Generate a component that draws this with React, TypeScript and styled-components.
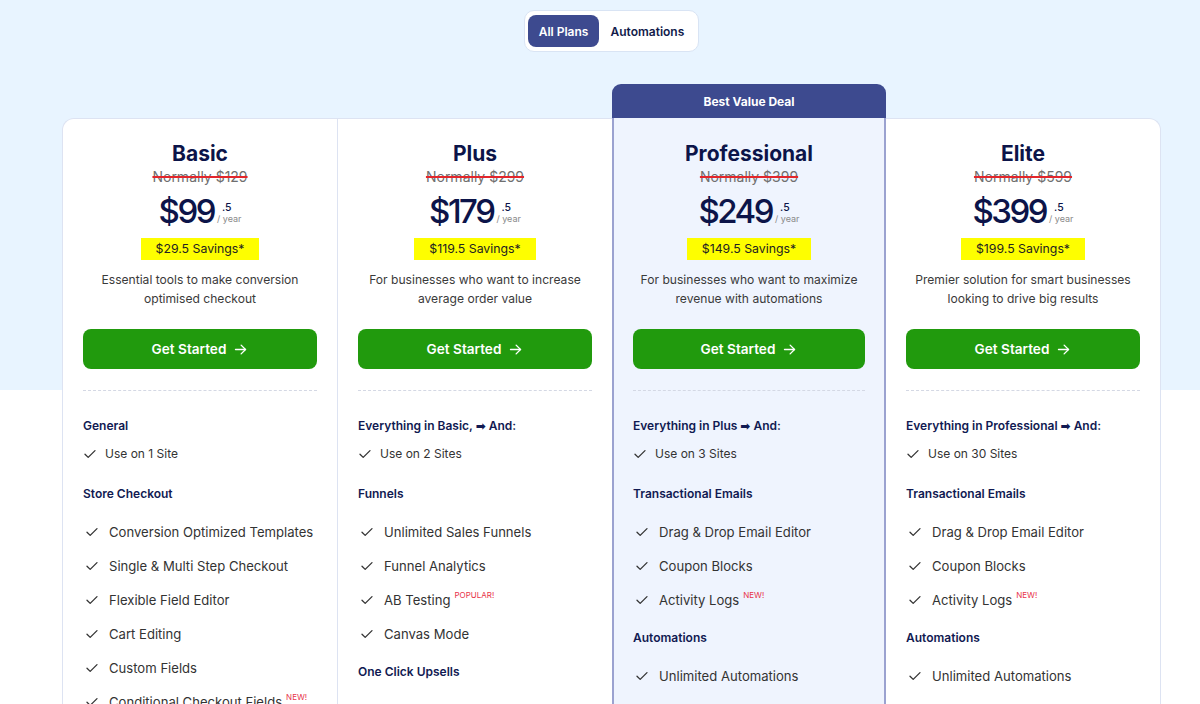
import React, { useState } from "react";
import styled, { createGlobalStyle } from "styled-components";

const Global = createGlobalStyle`
  * { box-sizing: border-box; }
  html, body { margin: 0; padding: 0; }
  body {
    font-family: Inter, "Noto Sans", "DejaVu Sans", sans-serif;
    background: #ffffff;
    -webkit-font-smoothing: antialiased;
  }
`;

const Page = styled.div`
  min-height: 704px;
  padding: 10px 39px 0 62px;
  background: linear-gradient(#e8f4ff 0, #e8f4ff 390px, #ffffff 390px);
  display: flex;
  flex-direction: column;
  align-items: center;
`;

const Toggle = styled.div`
  display: flex;
  padding: 4px 3px;
  background: #ffffff;
  border: 1px solid #d9e4f4;
  border-radius: 10px;
`;

const ToggleButton = styled.button<{ $active?: boolean }>`
  font-family: Inter, sans-serif;
  font-size: 12px;
  font-weight: 600;
  height: 32px;
  padding: 0 11px;
  border: none;
  border-radius: 8px;
  cursor: pointer;
  background: ${(p) => (p.$active ? "#3d4a8f" : "transparent")};
  color: ${(p) => (p.$active ? "#ffffff" : "#111a4a")};
`;

const Grid = styled.div`
  margin-top: 32px;
  width: 1099px;
  display: grid;
  grid-template-columns: 275px 275px 274px 275px;
  align-items: start;
`;

const Column = styled.div<{ $pos: "first" | "mid" | "last" }>`
  margin-top: 34px;
  background: #ffffff;
  border-top: 1px solid #dde3f2;
  border-left: ${(p) => (p.$pos === "last" ? "none" : "1px solid #dde3f2")};
  border-right: ${(p) => (p.$pos === "last" ? "1px solid #dde3f2" : "none")};
  border-radius: ${(p) =>
    p.$pos === "first" ? "12px 0 0 0" : p.$pos === "last" ? "0 12px 0 0" : "0"};
  padding: 22px 20px 40px 20px;
  min-height: 700px;
`;

const FeaturedColumn = styled.div`
  display: flex;
  flex-direction: column;
`;

const FeaturedHeader = styled.div`
  height: 34px;
  background: #3d4a8f;
  border-radius: 9px 9px 0 0;
  color: #ffffff;
  font-size: 12px;
  font-weight: 700;
  display: flex;
  align-items: center;
  justify-content: center;
`;

const FeaturedBody = styled.div`
  background: #eff4fe;
  border-left: 2px solid #9ba2d0;
  border-right: 2px solid #9ba2d0;
  padding: 23px 19px 40px 19px;
  min-height: 700px;
`;

const Head = styled.div`
  display: flex;
  flex-direction: column;
  align-items: center;
  text-align: center;
`;

const Title = styled.h2`
  margin: 0;
  font-size: 21px;
  line-height: 26px;
  font-weight: 700;
  color: #0c1449;
`;

const Normally = styled.div`
  font-size: 14px;
  line-height: 20px;
  color: #6f6f6f;
  text-decoration: line-through;
  text-decoration-color: #e3262c;
  text-decoration-thickness: 1.5px;
`;

const PriceRow = styled.div`
  display: flex;
  align-items: center;
  height: 40px;
  margin-top: 4px;
`;

const Price = styled.span`
  font-size: 33px;
  line-height: 40px;
  font-weight: 500;
  color: #0c1449;
  letter-spacing: -2.5px;
`;

const PriceSide = styled.span`
  display: flex;
  flex-direction: column;
  align-items: flex-start;
  margin-left: 3px;
  margin-top: 4px;
`;

const Cents = styled.span`
  font-size: 10.5px;
  line-height: 11px;
  font-weight: 500;
  color: #0c1449;
  margin-left: 5px;
`;

const Per = styled.span`
  font-size: 9px;
  line-height: 12px;
  color: #8a8a8a;
`;

const Savings = styled.div`
  margin-top: 7px;
  background: #fefe00;
  color: #222222;
  font-size: 12.3px;
  line-height: 22px;
  padding: 0 15px;
`;

const Desc = styled.p`
  margin: 10px 0 0;
  font-size: 12.1px;
  line-height: 19px;
  color: #3a3a3a;
  max-width: 240px;
`;

const CTA = styled.button`
  margin-top: 21px;
  width: 100%;
  height: 40px;
  border: none;
  border-radius: 8px;
  background: #219a0d;
  color: #ffffff;
  font-family: Inter, sans-serif;
  font-size: 13.6px;
  font-weight: 600;
  display: flex;
  align-items: center;
  justify-content: center;
  gap: 7px;
  cursor: pointer;
`;

const Divider = styled.hr`
  margin: 21px 0 0;
  border: none;
  border-top: 1px dashed #d4d8e4;
`;

const Sections = styled.div`
  margin-top: 26px;
  display: flex;
  flex-direction: column;
`;

const Section = styled.div<{ $compact?: boolean }>`
  display: flex;
  flex-direction: column;
  margin-bottom: ${(p) => (p.$compact ? "22px" : "12px")};
`;

const SectionTitle = styled.div<{ $compact?: boolean }>`
  font-size: 12px;
  line-height: 18px;
  font-weight: 600;
  color: #111a52;
  margin-bottom: ${(p) => (p.$compact ? "10px" : "12px")};
`;

const Item = styled.div<{ $compact?: boolean }>`
  display: flex;
  align-items: center;
  gap: ${(p) => (p.$compact ? "9px" : "11px")};
  padding: ${(p) => (p.$compact ? "0 0 0 1px" : "7px 0 7px 3px")};
  font-size: ${(p) => (p.$compact ? "12px" : "13.1px")};
  line-height: ${(p) => (p.$compact ? "18px" : "20px")};
  color: #333333;
  white-space: nowrap;
`;

const Tag = styled.sup`
  font-size: 8px;
  line-height: 0;
  color: #e8334a;
  margin-left: 4px;
  position: relative;
  top: -2px;
`;

const Check = () => (
  <svg width="12" height="10" viewBox="0 0 12 10" fill="none">
    <path d="M1 5.2 L4.2 8.4 L11 1.6" stroke="#333" strokeWidth="1.3" strokeLinecap="round" strokeLinejoin="round" />
  </svg>
);

const Arrow = () => (
  <svg width="15" height="15" viewBox="0 0 24 24" fill="none" stroke="#fff" strokeWidth="2.2" strokeLinecap="round" strokeLinejoin="round">
    <path d="M4 12h16" />
    <path d="M13 5l7 7-7 7" />
  </svg>
);

type Feat = { text: string; tag?: string };
type Sec = { title: string; items: Feat[]; compact?: boolean };
type Plan = {
  name: string;
  normally: string;
  price: string;
  savings: string;
  desc: string;
  sections: Sec[];
  featured?: boolean;
};

const plans: Plan[] = [
  {
    name: "Basic",
    normally: "Normally $129",
    price: "$99",
    savings: "$29.5 Savings*",
    desc: "Essential tools to make conversion optimised checkout",
    sections: [
      { title: "General", compact: true, items: [{ text: "Use on 1 Site" }] },
      {
        title: "Store Checkout",
        items: [
          { text: "Conversion Optimized Templates" },
          { text: "Single & Multi Step Checkout" },
          { text: "Flexible Field Editor" },
          { text: "Cart Editing" },
          { text: "Custom Fields" },
          { text: "Conditional Checkout Fields", tag: "NEW!" },
        ],
      },
    ],
  },
  {
    name: "Plus",
    normally: "Normally $299",
    price: "$179",
    savings: "$119.5 Savings*",
    desc: "For businesses who want to increase average order value",
    sections: [
      { title: "Everything in Basic, \u27A1 And:", compact: true, items: [{ text: "Use on 2 Sites" }] },
      {
        title: "Funnels",
        items: [
          { text: "Unlimited Sales Funnels" },
          { text: "Funnel Analytics" },
          { text: "AB Testing", tag: "POPULAR!" },
          { text: "Canvas Mode" },
        ],
      },
      { title: "One Click Upsells", items: [{ text: "Multiple Upsells" }] },
    ],
  },
  {
    name: "Professional",
    normally: "Normally $399",
    price: "$249",
    savings: "$149.5 Savings*",
    desc: "For businesses who want to maximize revenue with automations",
    featured: true,
    sections: [
      { title: "Everything in Plus \u27A1 And:", compact: true, items: [{ text: "Use on 3 Sites" }] },
      {
        title: "Transactional Emails",
        items: [
          { text: "Drag & Drop Email Editor" },
          { text: "Coupon Blocks" },
          { text: "Activity Logs", tag: "NEW!" },
        ],
      },
      { title: "Automations", items: [{ text: "Unlimited Automations" }, { text: "Multiple Triggers" }] },
    ],
  },
  {
    name: "Elite",
    normally: "Normally $599",
    price: "$399",
    savings: "$199.5 Savings*",
    desc: "Premier solution for smart businesses looking to drive big results",
    sections: [
      { title: "Everything in Professional \u27A1 And:", compact: true, items: [{ text: "Use on 30 Sites" }] },
      {
        title: "Transactional Emails",
        items: [
          { text: "Drag & Drop Email Editor" },
          { text: "Coupon Blocks" },
          { text: "Activity Logs", tag: "NEW!" },
        ],
      },
      { title: "Automations", items: [{ text: "Unlimited Automations" }, { text: "Multiple Triggers" }] },
    ],
  },
];

const PlanContent = ({ plan }: { plan: Plan }) => (
  <>
    <Head>
      <Title>{plan.name}</Title>
      <Normally>{plan.normally}</Normally>
      <PriceRow>
        <Price>{plan.price}</Price>
        <PriceSide>
          <Cents>.5</Cents>
          <Per>/ year</Per>
        </PriceSide>
      </PriceRow>
      <Savings>{plan.savings}</Savings>
      <Desc>{plan.desc}</Desc>
    </Head>
    <CTA>
      Get Started <Arrow />
    </CTA>
    <Divider />
    <Sections>
      {plan.sections.map((s) => (
        <Section key={s.title} $compact={s.compact}>
          <SectionTitle $compact={s.compact}>{s.title}</SectionTitle>
          {s.items.map((it) => (
            <Item key={it.text} $compact={s.compact}>
              <Check />
              <span>
                {it.text}
                {it.tag && <Tag>{it.tag}</Tag>}
              </span>
            </Item>
          ))}
        </Section>
      ))}
    </Sections>
  </>
);

export default function App() {
  const [tab, setTab] = useState("all");
  return (
    <>
      <Global />
      <Page>
        <Toggle>
          <ToggleButton $active={tab === "all"} onClick={() => setTab("all")}>
            All Plans
          </ToggleButton>
          <ToggleButton $active={tab === "auto"} onClick={() => setTab("auto")}>
            Automations
          </ToggleButton>
        </Toggle>
        <Grid>
          {plans.map((p, i) =>
            p.featured ? (
              <FeaturedColumn key={p.name}>
                <FeaturedHeader>Best Value Deal</FeaturedHeader>
                <FeaturedBody>
                  <PlanContent plan={p} />
                </FeaturedBody>
              </FeaturedColumn>
            ) : (
              <Column key={p.name} $pos={i === 0 ? "first" : i === plans.length - 1 ? "last" : "mid"}>
                <PlanContent plan={p} />
              </Column>
            )
          )}
        </Grid>
      </Page>
    </>
  );
}
